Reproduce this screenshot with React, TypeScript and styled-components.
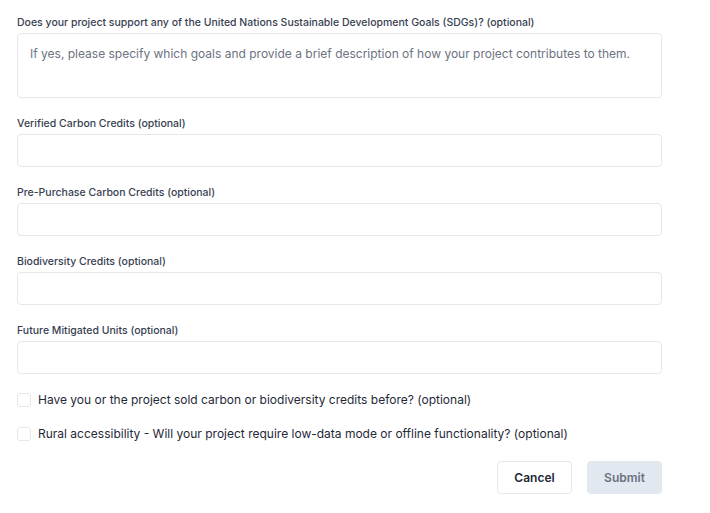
import React from 'react'
import styled, { createGlobalStyle } from 'styled-components'

const Global = createGlobalStyle`
  body {
    margin: 0;
    background: #ffffff;
    font-family: Inter, "Noto Sans", sans-serif;
  }
`

const Form = styled.form`
  width: 645px;
  padding: 13px 0 0 17px;
  display: flex;
  flex-direction: column;
  gap: 16px;
`

const Field = styled.div`
  display: flex;
  flex-direction: column;
  gap: 1px;
`

const Label = styled.label`
  font-size: 10.5px;
  line-height: 19px;
  font-weight: 500;
  color: #374151;
`

const Input = styled.input`
  box-sizing: border-box;
  height: 33px;
  width: 100%;
  border: 1px solid #e5e7eb;
  border-radius: 4px;
  padding: 0 12px;
  font: inherit;
  font-size: 12px;
  outline: none;
`

const TextArea = styled.textarea`
  box-sizing: border-box;
  height: 65px;
  width: 100%;
  border: 1px solid #e5e7eb;
  border-radius: 4px;
  padding: 11px 12px;
  font: inherit;
  font-size: 12px;
  line-height: 18px;
  resize: none;
  outline: none;

  &::placeholder {
    color: #6b7280;
  }
`

const Checks = styled.div`
  display: flex;
  flex-direction: column;
  gap: 14px;
`

const CheckRow = styled.label`
  display: flex;
  align-items: center;
  gap: 7px;
  font-size: 12px;
  line-height: 20px;
  color: #1f2937;
`

const Box = styled.input.attrs({ type: 'checkbox' })`
  appearance: none;
  margin: 0;
  width: 14px;
  height: 14px;
  border: 1px solid #e5e7eb;
  border-radius: 3px;
  background: #fff;
`

const Actions = styled.div`
  display: flex;
  justify-content: flex-end;
  gap: 15px;
  margin-top: 1px;
`

const Button = styled.button<{ $primary?: boolean }>`
  box-sizing: border-box;
  width: 75px;
  height: 33px;
  border-radius: 4px;
  font: inherit;
  font-size: 12px;
  font-weight: 600;
  border: 1px solid ${p => (p.$primary ? '#e2e8f0' : '#e5e7eb')};
  background: ${p => (p.$primary ? '#e2e8f0' : '#ffffff')};
  color: ${p => (p.$primary ? '#6b7280' : '#1f2937')};
`

const fields = [
  'Verified Carbon Credits (optional)',
  'Pre-Purchase Carbon Credits (optional)',
  'Biodiversity Credits (optional)',
  'Future Mitigated Units (optional)',
]

const checks = [
  'Have you or the project sold carbon or biodiversity credits before? (optional)',
  'Rural accessibility - Will your project require low-data mode or offline functionality? (optional)',
]

export default function App() {
  return (
    <>
      <Global />
      <Form onSubmit={e => e.preventDefault()}>
        <Field>
          <Label>Does your project support any of the United Nations Sustainable Development Goals (SDGs)? (optional)</Label>
          <TextArea placeholder="If yes, please specify which goals and provide a brief description of how your project contributes to them." />
        </Field>
        {fields.map(f => (
          <Field key={f}>
            <Label>{f}</Label>
            <Input />
          </Field>
        ))}
        <Checks>
          {checks.map(c => (
            <CheckRow key={c}>
              <Box />
              {c}
            </CheckRow>
          ))}
        </Checks>
        <Actions>
          <Button type="button">Cancel</Button>
          <Button type="submit" $primary disabled>Submit</Button>
        </Actions>
      </Form>
    </>
  )
}
